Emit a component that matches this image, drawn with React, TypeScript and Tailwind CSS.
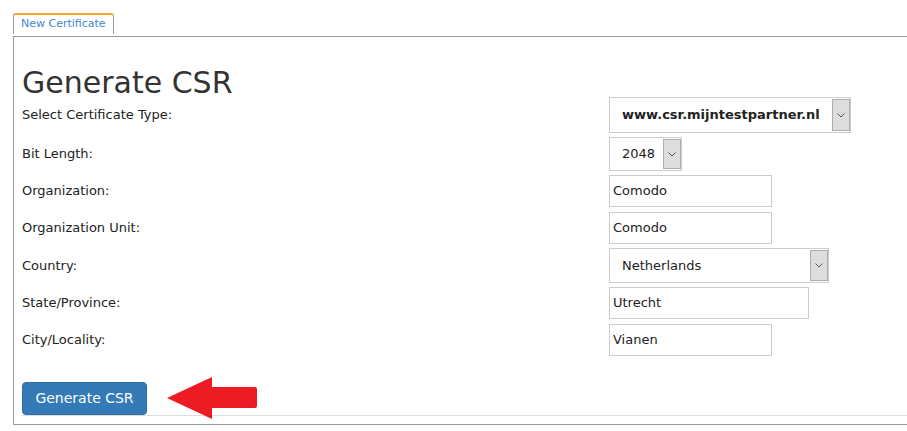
import React from "react";

const font = { fontFamily: '"DejaVu Sans", Verdana, sans-serif' };

function Chevron() {
  return (
    <svg width="8" height="5" viewBox="0 0 8 5" fill="none">
      <path d="M0.5 0.5 L4 4 L7.5 0.5" stroke="#555" strokeWidth="1" />
    </svg>
  );
}

function SelectBox({ value, width, height, bold }: { value: string; width: string; height: string; bold?: boolean }) {
  return (
    <div className={`flex items-stretch border border-[#ccc] bg-white ${width} ${height}`}>
      <div className={`flex flex-1 items-center pl-[12px] text-[13px] text-[#222] ${bold ? "font-bold" : ""}`}>{value}</div>
      <div className="my-px flex w-[18px] items-center justify-center border border-[#adadad] bg-[#dddddd]">
        <Chevron />
      </div>
    </div>
  );
}

function TextBox({ value, width }: { value: string; width: string }) {
  return (
    <div className={`flex h-[32px] items-center border border-[#ccc] bg-white px-[3px] text-[13px] text-[#222] ${width}`}>
      {value}
    </div>
  );
}

function Row({ label, children, className }: { label: string; children: React.ReactNode; className?: string }) {
  return (
    <div className={`flex items-center ${className ?? ""}`}>
      <div className="w-[587px] text-[13px] text-[#222]">{label}</div>
      {children}
    </div>
  );
}

export default function App() {
  return (
    <div className="min-h-[431px] bg-white pt-[13px] pl-[13px]" style={font}>
      {/* tab strip */}
      <div className="flex h-[21px] w-[101px] items-center rounded-t-[3px] border-t-2 border-r border-l border-t-[#f0a830] border-r-[#999] border-l-[#999] pl-[7px] text-[11px] text-[#3f87cf]">
        New Certificate
      </div>

      <div className="mt-[2px] border-t border-b border-l border-[#999] pl-[8px] pb-[8px]">
        <h1 className="mt-[31px] h-[29px] text-[30px] leading-[30px] text-[#333]">Generate CSR</h1>

        <Row label="Select Certificate Type:">
          <SelectBox value="www.csr.mijntestpartner.nl" width="w-[242px]" height="h-[36px]" bold />
        </Row>
        <Row label="Bit Length:" className="mt-[4px]">
          <SelectBox value="2048" width="w-[73px]" height="h-[34px]" />
        </Row>
        <Row label="Organization:" className="mt-[4px]">
          <TextBox value="Comodo" width="w-[163px]" />
        </Row>
        <Row label="Organization Unit:" className="mt-[5px]">
          <TextBox value="Comodo" width="w-[163px]" />
        </Row>
        <Row label="Country:" className="mt-[4px]">
          <SelectBox value="Netherlands" width="w-[220px]" height="h-[35px]" />
        </Row>
        <Row label="State/Province:" className="mt-[4px]">
          <TextBox value="Utrecht" width="w-[200px]" />
        </Row>
        <Row label="City/Locality:" className="mt-[5px]">
          <TextBox value="Vianen" width="w-[163px]" />
        </Row>

        <div className="relative mt-[26px] border-b border-[#ddd]">
          <button className="h-[33px] w-[125px] rounded-[4px] border border-[#2e6da4] bg-[#337ab7] text-[14px] text-white">
            Generate CSR
          </button>
          {/* red annotation arrow */}
          <svg className="absolute top-[-5px] left-[145px]" width="92" height="42" viewBox="0 0 92 42">
            <path d="M0 21 L45 0 L45 10 L88 10 Q90 10 90 12 L90 29 Q90 31 88 31 L45 31 L45 42 Z" fill="#ed1c24" />
          </svg>
        </div>
      </div>
    </div>
  );
}
